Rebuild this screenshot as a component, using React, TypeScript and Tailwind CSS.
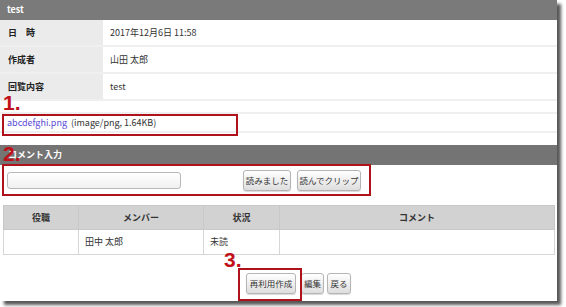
import React from 'react';

const font = { fontFamily: '"Noto Sans CJK JP", "Open Sans", sans-serif' };
const redFont = { fontFamily: '"Liberation Sans", sans-serif' };

function Btn({ label, className = '' }: { label: string; className?: string }) {
  return (
    <button
      className={`h-[21px] shrink-0 whitespace-nowrap text-[8.5px] text-[#333] border border-[#b5b5b5] rounded-[3px] bg-gradient-to-b from-white to-[#dedede] shadow-[0_1px_1px_rgba(0,0,0,0.15)] flex items-center justify-center ${className}`}
    >
      {label}
    </button>
  );
}

function InfoRow({ label, value }: { label: string; value: string }) {
  return (
    <div className="flex h-[27px] border-b-2 border-[#efefef]">
      <div className="w-[103px] bg-[#ebebeb] pl-[8px] flex items-center text-[9px] font-bold text-[#222]">
        {label}
      </div>
      <div className="flex-1 pl-[7px] flex items-center text-[9px] text-[#333]">{value}</div>
    </div>
  );
}

export default function App() {
  return (
    <div className="w-[566px] h-[307px] bg-white relative overflow-hidden" style={font}>
      <div className="w-[557px] h-[301px] bg-white shadow-[4px_4px_3px_rgba(0,0,0,0.65)] flex flex-col">
        {/* header */}
        <div className="h-[20px] bg-[#7a7a7a] text-white text-[9px] font-bold pl-[7px] flex items-center">test</div>

        <InfoRow label="日　時" value="2017年12月6日 11:58" />
        <InfoRow label="作成者" value="山田 太郎" />
        <InfoRow label="回覧内容" value="test" />

        <div className="h-[13px] border-b-2 border-[#efefef]" />
        <div className="h-[19px] border-b-2 border-[#efefef] flex items-center pl-[7px] text-[9px]">
          <span className="text-[#5b4ad6]">abcdefghi.png</span>
          <span className="ml-[4px] text-[#333]">(image/png, 1.64KB)</span>
        </div>

        {/* comment input */}
        <div className="mt-[12px] h-[20px] bg-[#747474] text-white text-[9px] font-bold pl-[8px] flex items-center">
          コメント入力
        </div>
        <div className="h-[30px] flex items-center pl-[7px]">
          <input className="w-[174px] h-[17px] border border-[#b8b8b8] rounded-[3px] bg-gradient-to-b from-white to-[#f0f0f0]" />
          <Btn label="読みました" className="ml-[62px] w-[48px]" />
          <Btn label="読んでクリップ" className="ml-[6px] w-[64px]" />
        </div>

        {/* members table */}
        <table className="mt-[10px] ml-[3px] w-[552px] border-collapse text-[9px] text-[#333]">
          <thead>
            <tr className="h-[24px] bg-[#d2d2d2]">
              <th className="w-[75px] border border-[#c8c8c8] font-bold">役職</th>
              <th className="w-[125px] border border-[#c8c8c8] font-bold">メンバー</th>
              <th className="w-[76px] border border-[#c8c8c8] font-bold">状況</th>
              <th className="border border-[#c8c8c8] font-bold">コメント</th>
            </tr>
          </thead>
          <tbody>
            <tr className="h-[25px]">
              <td className="border border-[#d6d6d6]" />
              <td className="border border-[#d6d6d6] pl-[6px]">田中 太郎</td>
              <td className="border border-[#d6d6d6] pl-[6px]">未読</td>
              <td className="border border-[#d6d6d6]" />
            </tr>
          </tbody>
        </table>

        <div className="mt-[18px] flex pl-[246px]">
          <Btn label="再利用作成" className="w-[50px]" />
          <Btn label="編集" className="ml-[5px] w-[23px]" />
          <Btn label="戻る" className="ml-[3px] w-[24px]" />
        </div>
      </div>

      {/* annotations */}
      <div className="absolute left-[3px] top-[92px] text-[#c0101a] text-[21px] font-bold leading-none" style={redFont}>1.</div>
      <div className="absolute left-[2px] top-[114px] w-[236px] h-[22px] border-2 border-[#b0121b]" />
      <div className="absolute left-[3px] top-[143px] text-[#c0101a] text-[21px] font-bold leading-none" style={redFont}>2.</div>
      <div className="absolute left-[2px] top-[164px] w-[369px] h-[32px] border-2 border-[#b0121b]" />
      <div className="absolute left-[224px] top-[249px] text-[#c0101a] text-[21px] font-bold leading-none" style={redFont}>3.</div>
      <div className="absolute left-[238px] top-[268px] w-[64px] h-[33px] border-2 border-[#b0121b]" />
    </div>
  );
}
